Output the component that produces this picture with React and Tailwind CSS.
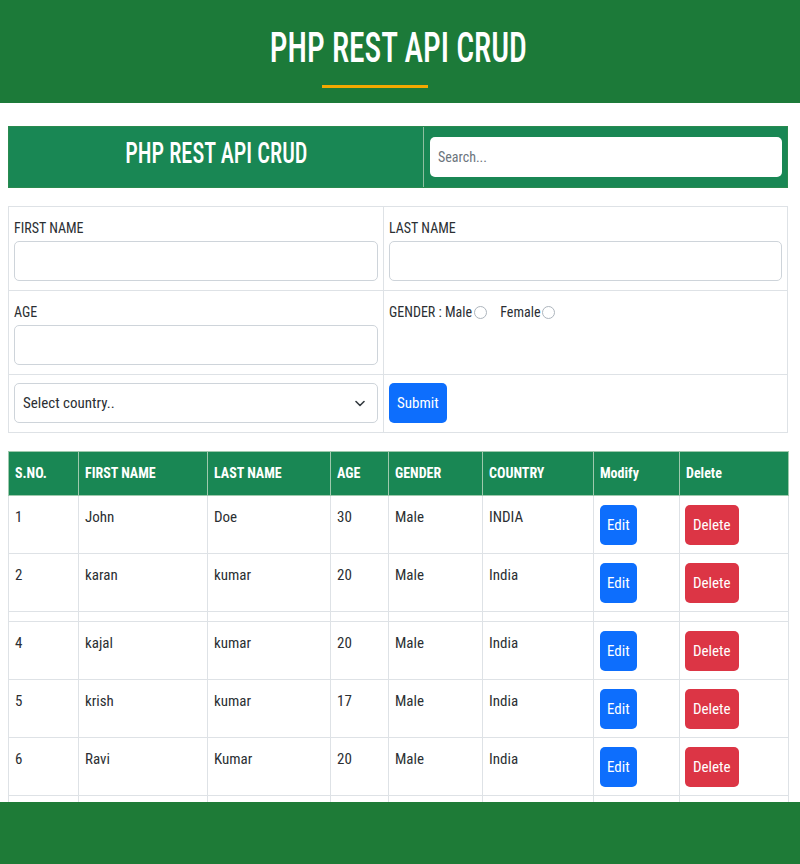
import React from "react";

const rows = [
  { n: "1", f: "John", l: "Doe", a: "30", g: "Male", c: "INDIA" },
  { n: "2", f: "karan", l: "kumar", a: "20", g: "Male", c: "India" },
  null,
  { n: "4", f: "kajal", l: "kumar", a: "20", g: "Male", c: "India" },
  { n: "5", f: "krish", l: "kumar", a: "17", g: "Male", c: "India" },
  { n: "6", f: "Ravi", l: "Kumar", a: "20", g: "Male", c: "India" },
  { n: "7", f: "Amit", l: "Singh", a: "25", g: "Male", c: "India" },
];

const cols = [
  { t: "S.NO.", w: "w-[70px]" },
  { t: "FIRST NAME", w: "w-[129px]" },
  { t: "LAST NAME", w: "w-[123px]" },
  { t: "AGE", w: "w-[58px]" },
  { t: "GENDER", w: "w-[94px]" },
  { t: "COUNTRY", w: "w-[111px]" },
  { t: "Modify", w: "w-[86px]" },
  { t: "Delete", w: "w-[109px]" },
];

function Radio() {
  return (
    <span className="inline-block w-[13px] h-[13px] rounded-full border border-[#adb5bd] bg-white ml-[2px] align-[-2px]" />
  );
}

export default function App() {
  return (
    <div className="w-[800px] min-h-[864px] bg-white text-[#2b2f33] font-['Roboto_Condensed','Liberation_Sans',sans-serif]">
      <header className="h-[103px] bg-[#1c7a39] flex flex-col items-center pt-[27px]">
        <h1 className="text-[42px] leading-none font-medium text-white scale-x-[0.75] ml-[-4px]">PHP REST API CRUD</h1>
        <div className="mt-[16px] mr-[50px] w-[106px] h-[3px] bg-[#f2a900]" />
      </header>

      <main className="px-[8px] pt-[23px] pb-[80px] w-[796px]">
        <div className="flex h-[62px] bg-[#198754] border border-[#2a8a4f]">
          <div className="w-[415px] flex items-center justify-center pb-[8px] border-r border-[#8fbfa0]">
            <span className="text-[29px] leading-none font-medium text-white scale-x-[0.77]">PHP REST API CRUD</span>
          </div>
          <div className="flex-1 flex items-center pl-[6px] pr-[5px]">
            <div className="w-full h-[40px] bg-white rounded-[5px] flex items-center px-[8px] text-[14px] text-[#6c757d]">
              Search...
            </div>
          </div>
        </div>

        <div className="mt-[18px] grid grid-cols-[375px_1fr] border border-[#dee2e6]">
          <div className="border-r border-b border-[#dee2e6] pt-[11px] pb-[9px] px-[5px]">
            <div className="text-[14px] leading-[20px] mb-[3px]">FIRST NAME</div>
            <div className="h-[40px] border border-[#ced4da] rounded-[5px] bg-white" />
          </div>
          <div className="border-b border-[#dee2e6] pt-[11px] pb-[9px] px-[5px]">
            <div className="text-[14px] leading-[20px] mb-[3px]">LAST NAME</div>
            <div className="h-[40px] border border-[#ced4da] rounded-[5px] bg-white" />
          </div>
          <div className="border-r border-b border-[#dee2e6] pt-[11px] pb-[9px] px-[5px]">
            <div className="text-[14px] leading-[20px] mb-[3px]">AGE</div>
            <div className="h-[40px] border border-[#ced4da] rounded-[5px] bg-white" />
          </div>
          <div className="border-b border-[#dee2e6] pt-[11px] pb-[9px] px-[5px]">
            <div className="text-[14px] leading-[20px]">
              GENDER : Male<Radio /> <span className="ml-[10px]">Female</span><Radio />
            </div>
          </div>
          <div className="border-r border-[#dee2e6] pt-[8px] pb-[9px] px-[5px]">
            <div className="h-[40px] border border-[#ced4da] rounded-[5px] bg-white flex items-center justify-between pl-[8px] pr-[12px] text-[15px]">
              <span>Select country..</span>
              <svg width="10" height="7" viewBox="0 0 10 7" fill="none">
                <path d="M1 1.5 L5 5.5 L9 1.5" stroke="#343a40" strokeWidth="1.6" strokeLinecap="round" strokeLinejoin="round" />
              </svg>
            </div>
          </div>
          <div className="pt-[8px] pb-[9px] px-[5px]">
            <button className="h-[40px] px-[8px] rounded-[5px] bg-[#0d6efd] text-white text-[15px]">Submit</button>
          </div>
        </div>

        <table className="mt-[18px] w-[780px] table-fixed border-collapse border border-[#dee2e6]">
          <thead>
            <tr className="bg-[#198754] h-[44px]">
              {cols.map((c) => (
                <th key={c.t} className={`${c.w} text-left align-middle px-[6px] text-[14px] font-bold text-white border border-[#9ec9ad]`}>
                  {c.t}
                </th>
              ))}
            </tr>
          </thead>
          <tbody>
            {rows.map((r, i) =>
              r ? (
                <tr key={i}>
                  {[r.n, r.f, r.l, r.a, r.g, r.c].map((v, j) => (
                    <td key={j} className="align-top px-[6px] pt-[9px] pb-[9px] text-[15px] leading-[24px] border border-[#dee2e6]">
                      {v}
                    </td>
                  ))}
                  <td className="align-top pl-[6px] pt-[9px] pb-[8px] border border-[#dee2e6]">
                    <button className="h-[40px] px-[7px] rounded-[5px] bg-[#0d6efd] text-white text-[15px]">Edit</button>
                  </td>
                  <td className="align-top pl-[5px] pt-[9px] pb-[8px] border border-[#dee2e6]">
                    <button className="h-[40px] px-[8px] rounded-[5px] bg-[#dc3545] text-white text-[15px]">Delete</button>
                  </td>
                </tr>
              ) : (
                <tr key={i} className="h-[10px]">
                  {cols.map((c) => (
                    <td key={c.t} className="p-0 h-[10px] border border-[#dee2e6]" />
                  ))}
                </tr>
              )
            )}
          </tbody>
        </table>
      </main>

      <footer className="fixed bottom-0 left-0 w-[800px] h-[62px] bg-[#1e7b37]" />
    </div>
  );
}
